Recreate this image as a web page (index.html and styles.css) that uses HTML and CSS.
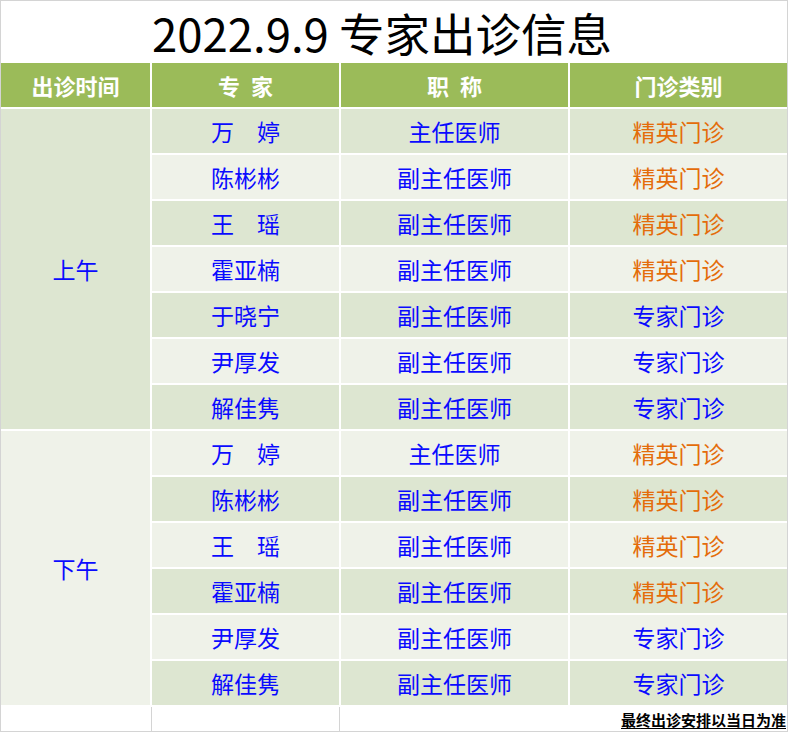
FILE: index.html
```html
<!DOCTYPE html>
<html lang="zh-CN">
<head>
<meta charset="utf-8">
<title>2022.9.9 专家出诊信息</title>
<link rel="stylesheet" href="styles.css">
</head>
<body>
<div class="sheet">
  <div class="title"><span class="title-text">2022.9.9 专家出诊信息</span></div>
  <div class="table">
    <div class="th">出诊时间</div>
    <div class="th">专&ensp;家</div>
    <div class="th">职&ensp;称</div>
    <div class="th">门诊类别</div>

    <div class="time am">上午</div>
    <div class="td d">万　婷</div><div class="td d">主任医师</div><div class="td d orange">精英门诊</div>
    <div class="td l">陈彬彬</div><div class="td l">副主任医师</div><div class="td l orange">精英门诊</div>
    <div class="td d">王　瑶</div><div class="td d">副主任医师</div><div class="td d orange">精英门诊</div>
    <div class="td l">霍亚楠</div><div class="td l">副主任医师</div><div class="td l orange">精英门诊</div>
    <div class="td d">于晓宁</div><div class="td d">副主任医师</div><div class="td d">专家门诊</div>
    <div class="td l">尹厚发</div><div class="td l">副主任医师</div><div class="td l">专家门诊</div>
    <div class="td d">解佳隽</div><div class="td d">副主任医师</div><div class="td d">专家门诊</div>

    <div class="time pm">下午</div>
    <div class="td l">万　婷</div><div class="td l">主任医师</div><div class="td l orange">精英门诊</div>
    <div class="td d">陈彬彬</div><div class="td d">副主任医师</div><div class="td d orange">精英门诊</div>
    <div class="td l">王　瑶</div><div class="td l">副主任医师</div><div class="td l orange">精英门诊</div>
    <div class="td d">霍亚楠</div><div class="td d">副主任医师</div><div class="td d orange">精英门诊</div>
    <div class="td l">尹厚发</div><div class="td l">副主任医师</div><div class="td l">专家门诊</div>
    <div class="td d">解佳隽</div><div class="td d">副主任医师</div><div class="td d">专家门诊</div>
  </div>
  <div class="foot">
    <div class="fcell c1"></div>
    <div class="fcell c2"></div>
    <div class="note">最终出诊安排以当日为准</div>
  </div>
</div>
</body>
</html>
```

FILE: styles.css
```css
html, body {
  margin: 0;
  padding: 0;
  background: #ffffff;
}

body {
  font-family: "Noto Sans CJK SC", "Noto Sans", sans-serif;
}

.sheet {
  width: 788px;
  height: 732px;
  box-sizing: border-box;
  border: 1px solid #d4d4d4;
  background: #ffffff;
}

.title {
  height: 62px;
  box-sizing: border-box;
  padding: 2px 24px 0 0;
  display: flex;
  align-items: center;
  justify-content: center;
  color: #000000;
  white-space: nowrap;
}

.title-text {
  font-size: 45.5px;
  line-height: 1.3;
}

.table {
  display: grid;
  grid-template-columns: 149px 187px 227px 217px;
  grid-auto-rows: 44px;
  gap: 2px;
  background: #ffffff;
}

.th {
  background: #9bbb59;
  color: #ffffff;
  font-weight: bold;
  font-size: 22px;
  display: flex;
  align-items: center;
  justify-content: center;
  white-space: nowrap;
}

.td, .time {
  display: flex;
  align-items: center;
  justify-content: center;
  font-size: 23px;
  color: #0a0aff;
  white-space: nowrap;
}

.d { background: #dde6d1; }
.l { background: #eff2e9; }

.orange { color: #e46c0a; }

.time { grid-column: 1; }
.am { grid-row: span 7; background: #dde6d1; }
.pm { grid-row: span 6; background: #eff2e9; }

.foot {
  margin-top: 2px;
  height: 24px;
  display: flex;
}

.fcell {
  height: 100%;
  box-sizing: border-box;
  border-right: 1px solid #d4d4d4;
}

.c1 { width: 151px; }
.c2 { width: 188px; }

.note {
  flex: 1;
  display: flex;
  align-items: center;
  justify-content: flex-end;
  padding-right: 1px;
  font-size: 15px;
  font-weight: bold;
  text-decoration: underline;
  text-underline-offset: 2px;
  color: #000000;
  white-space: nowrap;
}
```
